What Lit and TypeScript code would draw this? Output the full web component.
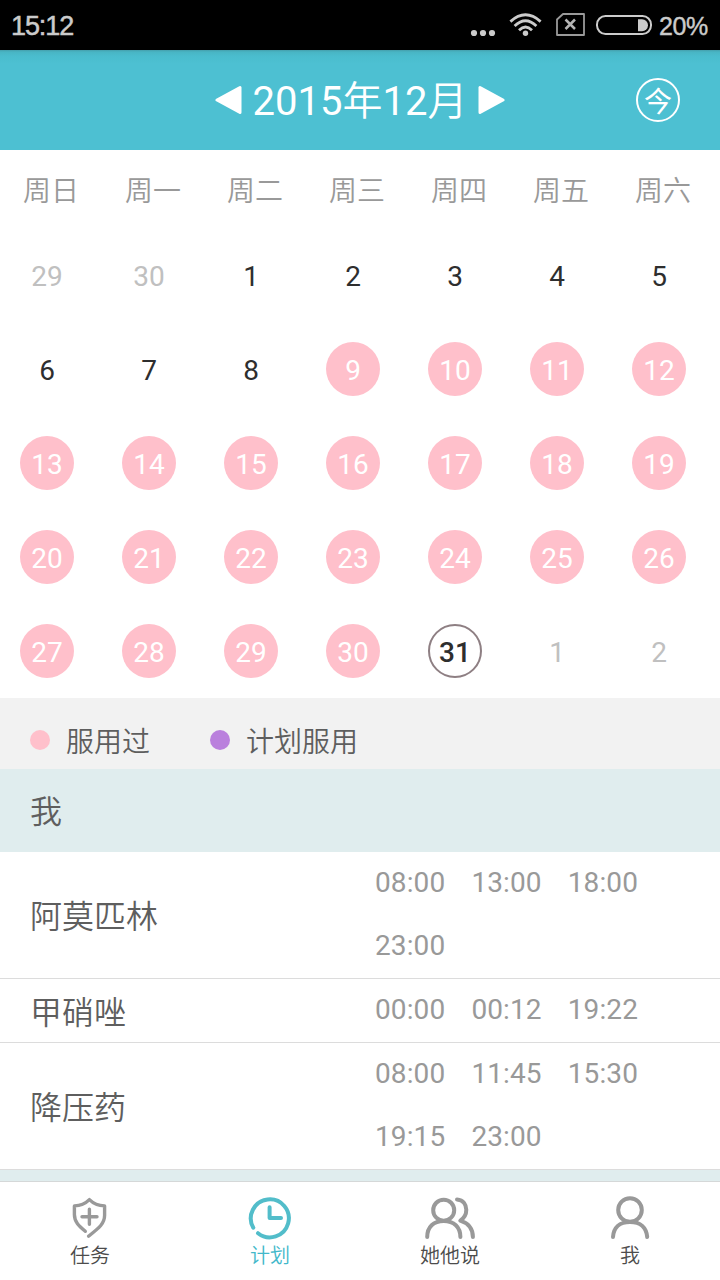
import { LitElement, html, svg, css } from "lit";
import { customElement, property } from "lit/decorators.js";

type DayKind = "plain" | "muted" | "taken" | "today";
interface Day {
  label: number;
  kind: DayKind;
}

const WEEKDAYS = ["周日", "周一", "周二", "周三", "周四", "周五", "周六"];

const DAYS: Day[] = [
  { label: 29, kind: "muted" },
  { label: 30, kind: "muted" },
  ...Array.from({ length: 31 }, (_, i): Day => {
    const label = i + 1;
    return { label, kind: label === 31 ? "today" : label >= 9 ? "taken" : "plain" };
  }),
  { label: 1, kind: "muted" },
  { label: 2, kind: "muted" },
];

const MEDICINES = [
  { name: "阿莫匹林", times: ["08:00", "13:00", "18:00", "23:00"] },
  { name: "甲硝唑", times: ["00:00", "00:12", "19:22"] },
  { name: "降压药", times: ["08:00", "11:45", "15:30", "19:15", "23:00"] },
];

const TABS = [
  {
    label: "任务",
    icon: svg`<path d="M25.3 36.3C19 31 14.4 27 14.4 19.5V10.9C21 10.7 25.6 8.4 29.4 4.6C33.2 8.4 37.8 10.7 44.6 10.9V20.3C44.6 28.5 39.5 32.5 28.6 41.2"/><path d="M29.4 14.3v15M22 21.8h15"/>`,
  },
  {
    label: "计划",
    icon: svg`<path stroke-width="4" d="M13.3 32.7A19 19 0 1 1 18 38.2"/><path stroke-width="4" d="M29.6 12.2V23H41"/>`,
    active: true,
  },
  {
    label: "她他说",
    icon: svg`<circle stroke-width="4" cx="23.7" cy="15.2" r="10.5"/><path stroke-width="4" d="M7.2 42C7.2 32 13.5 25.9 23.7 25.9S40.4 32 40.4 42M37 4.4C43.5 5 46.3 9.7 46.3 14.8C46.3 19 44.3 23 40.3 25.6C48 28 52.8 33.5 52.9 42"/>`,
  },
  {
    label: "我",
    icon: svg`<circle stroke-width="4" cx="30" cy="15" r="11.8"/><path stroke-width="4" d="M13 42C13.5 32.5 19.5 26.9 30 26.9S46.5 32.5 47.2 42"/>`,
  },
];

@customElement("status-bar")
class StatusBar extends LitElement {
  static styles = css`
    :host {
      display: flex;
      align-items: center;
      height: 50px;
      background: #000;
      color: #cbcbcb;
      font-family: "Liberation Sans", sans-serif;
    }
    .clock {
      flex: 1;
      padding: 2px 0 0 11px;
      font-size: 27px;
      letter-spacing: -1.1px;
      -webkit-text-stroke: 0.5px #cbcbcb;
    }
    .level {
      width: 61px;
      padding-top: 2px;
      font-size: 25px;
      letter-spacing: -0.4px;
      -webkit-text-stroke: 0.4px #cbcbcb;
    }
    svg {
      display: block;
    }
  `;
  render() {
    return html`
      <span class="clock">15:12</span>
      <svg width="189" height="50" viewBox="470 0 189 50" fill="none">
        <g fill="#cbcbcb">
          <circle cx="474" cy="33" r="3.1" />
          <circle cx="483" cy="33" r="3.1" />
          <circle cx="492" cy="33" r="3.1" />
          <circle cx="525.5" cy="33.2" r="2.7" />
          <path d="M638 19.2h4a6 6 0 0 1 6 6a6 6 0 0 1 -6 6H638z" />
        </g>
        <g stroke="#cbcbcb" stroke-width="2.8">
          <path d="M510.4 21.6Q525.5 8 540.6 21.6M514.6 26Q525.5 15.6 536.4 26M519 30.2Q525.5 23.8 532 30.2" />
        </g>
        <path d="M563 14h21v21h-27V19.5z" stroke="#9a9a9a" stroke-width="1.8" stroke-linejoin="round" />
        <path d="m565.5 19.5 9.5 9.5m0-9.5-9.5 9.5" stroke="#b5b5b5" stroke-width="2.5" />
        <rect x="597" y="16" width="54" height="18" rx="8.5" stroke="#cbcbcb" stroke-width="2" />
      </svg>
      <span class="level">20%</span>
    `;
  }
}

@customElement("month-header")
class MonthHeader extends LitElement {
  static styles = css`
    :host {
      display: grid;
      grid-template-columns: 1fr auto 1fr;
      align-items: center;
      height: 100px;
      background: linear-gradient(#459fac 0, #48b5c4 2px, #4abccd 6px, #4dc0d2 14px);
      color: #fff;
      font-family: Roboto, "Noto Sans CJK SC", sans-serif;
    }
    .month {
      grid-column: 2;
      display: flex;
      align-items: center;
      gap: 11px;
    }
    .title {
      box-sizing: border-box;
      height: 100px;
      padding-top: 2px;
      font-size: 40px;
      line-height: 100px;
    }
    .cjk {
      font-weight: 350;
    }
    .today {
      justify-self: end;
      box-sizing: border-box;
      width: 44px;
      height: 44px;
      margin-right: 40px;
      border: 2px solid #fff;
      border-radius: 50%;
      font: 28px/40px "Noto Sans CJK SC", sans-serif;
      text-align: center;
    }
    svg {
      display: block;
    }
  `;
  render() {
    return html`
      <div class="month">
        <svg width="27" height="30" viewBox="0 0 27 30">
          <path d="M2 15 25 2.5v25z" fill="#fff" stroke="#fff" stroke-width="3" stroke-linejoin="round" />
        </svg>
        <span class="title">2015<span class="cjk">年</span>12<span class="cjk">月</span></span>
        <svg width="27" height="30" viewBox="0 0 27 30">
          <path d="M25 15 2 2.5v25z" fill="#fff" stroke="#fff" stroke-width="3" stroke-linejoin="round" />
        </svg>
      </div>
      <div class="today">今</div>
    `;
  }
}

@customElement("month-grid")
class MonthGrid extends LitElement {
  static styles = css`
    :host {
      display: block;
      height: 548px;
      background: #fff;
      font-family: Roboto, "Noto Sans CJK SC", sans-serif;
      font-size: 28px;
    }
    .weekdays {
      display: grid;
      grid-template-columns: repeat(7, 102px);
      height: 78px;
      line-height: 84px;
      text-align: center;
      color: #999;
      font-weight: 350;
    }
    .days {
      display: grid;
      grid-template-columns: repeat(7, 102px);
      grid-auto-rows: 94px;
      align-items: center;
      padding-left: 20px;
    }
    .day {
      box-sizing: border-box;
      width: 54px;
      height: 54px;
      border-radius: 50%;
      line-height: 58px;
      text-align: center;
      color: #2e2e2e;
    }
    .muted {
      color: #c0c0c0;
    }
    .taken {
      background: #ffc0cb;
      color: #fff;
    }
    .today {
      border: 2px solid #8e7f83;
      line-height: 54px;
      font-weight: 500;
    }
  `;
  render() {
    return html`
      <div class="weekdays">${WEEKDAYS.map((d) => html`<span>${d}</span>`)}</div>
      <div class="days">
        ${DAYS.map((d) => html`<span class="day ${d.kind}">${d.label}</span>`)}
      </div>
    `;
  }
}

@customElement("medicine-row")
class MedicineRow extends LitElement {
  @property() name = "";
  @property({ attribute: false }) times: string[] = [];
  static styles = css`
    :host {
      display: flex;
      align-items: center;
      border-bottom: 1px solid #dcdcdc;
      background: #fff;
      font-family: Roboto, "Noto Sans CJK SC", sans-serif;
    }
    .name {
      width: 345px;
      padding: 4px 0 0 30px;
      font-size: 32px;
      line-height: 40px;
      font-weight: 350;
      color: #5e5e5e;
    }
    .times {
      display: grid;
      grid-template-columns: repeat(3, 96.4px);
      grid-auto-rows: 63px;
      font-size: 28px;
      line-height: 62px;
      letter-spacing: 0.1px;
      color: #999;
    }
  `;
  render() {
    return html`
      <span class="name">${this.name}</span>
      <div class="times">${this.times.map((t) => html`<span>${t}</span>`)}</div>
    `;
  }
}

@customElement("tab-bar")
class TabBar extends LitElement {
  static styles = css`
    :host {
      display: grid;
      grid-template-columns: repeat(4, 1fr);
      height: 98px;
      border-top: 1px solid #d5d8d8;
      background: #fff;
      font: 350 20px/26px "Noto Sans CJK SC", sans-serif;
    }
    .tab {
      display: flex;
      flex-direction: column;
      align-items: center;
      padding-top: 13px;
      color: #4c4c4c;
    }
    svg {
      width: 60px;
      height: 47px;
      fill: none;
      stroke: #999;
      stroke-width: 3.4;
      stroke-linecap: round;
      stroke-linejoin: round;
    }
    .active {
      color: #42b8ca;
    }
    .active svg {
      stroke: #52bdca;
    }
  `;
  render() {
    return TABS.map(
      (t) => html`
        <div class="tab ${t.active ? "active" : ""}">
          <svg viewBox="0 0 60 47">${t.icon}</svg>
          <span>${t.label}</span>
        </div>
      `
    );
  }
}

@customElement("app-root")
class AppRoot extends LitElement {
  static styles = css`
    :host {
      display: flex;
      flex-direction: column;
      width: 720px;
      height: 1280px;
      overflow: hidden;
      background: #fff;
      font-family: Roboto, "Noto Sans CJK SC", sans-serif;
      font-weight: 350;
    }
    month-header,
    month-grid,
    medicine-row,
    status-bar {
      font-weight: 400;
    }
    .legend {
      display: flex;
      align-items: center;
      height: 71px;
      padding-left: 30px;
      background: #f2f2f2;
      color: #5e5e5e;
      font-size: 28px;
      line-height: 40px;
    }
    .item {
      display: flex;
      align-items: center;
      gap: 16px;
      width: 180px;
      padding-top: 13px;
      white-space: nowrap;
    }
    .item span {
      padding-top: 4px;
      margin-bottom: -1px;
    }
    .dot {
      width: 20px;
      height: 20px;
      border-radius: 50%;
      background: #ffc0cb;
    }
    .planned {
      background: #ba80dd;
    }
    .person {
      height: 83px;
      padding-left: 30px;
      background: #e0edee;
      color: #5e5e5e;
      font-size: 32px;
      line-height: 87px;
    }
    .rest {
      flex: 1;
      background: #e0edee;
    }
  `;
  render() {
    return html`
      <status-bar></status-bar>
      <month-header></month-header>
      <month-grid></month-grid>
      <div class="legend">
        <div class="item"><i class="dot"></i><span>服用过</span></div>
        <div class="item"><i class="dot planned"></i><span>计划服用</span></div>
      </div>
      <div class="person">我</div>
      ${MEDICINES.map((m) => html`<medicine-row .name=${m.name} .times=${m.times}></medicine-row>`)}
      <div class="rest"></div>
      <tab-bar></tab-bar>
    `;
  }
}
